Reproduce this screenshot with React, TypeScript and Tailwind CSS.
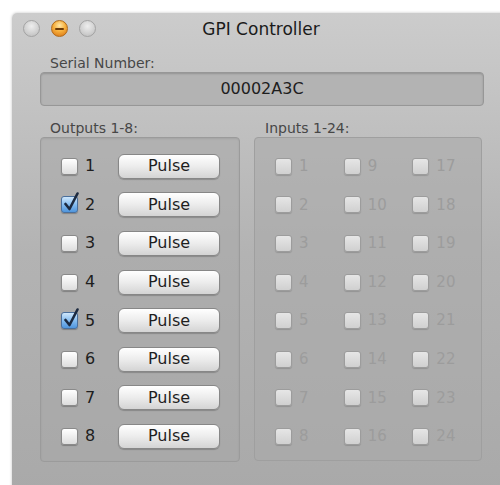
import React, { useState } from 'react';

const font = { fontFamily: '"DejaVu Sans", "Liberation Sans", sans-serif' };

const Light = ({ active }: { active?: boolean }) => (
  <div
    className={
      active
        ? 'w-[17px] h-[17px] rounded-full border border-[#b06a1a] bg-[radial-gradient(circle_at_50%_30%,#ffe7a8_0%,#f7b03c_45%,#d56e12_100%)] flex items-center justify-center'
        : 'w-[17px] h-[17px] rounded-full border border-[#a3a3a3] bg-[radial-gradient(circle_at_50%_35%,#eeeeee_0%,#cfcfcf_60%,#b9b9b9_100%)]'
    }
  >
    {active && <div className="w-[9px] h-[2px] bg-[#6b3a08] rounded-sm" />}
  </div>
);

const CheckBox = ({ checked, disabled, onClick }: { checked?: boolean; disabled?: boolean; onClick?: () => void }) => (
  <div
    onClick={onClick}
    className={
      'relative w-[17px] h-[17px] rounded-[3px] border shrink-0 ' +
      (disabled
        ? 'border-[#9c9c9c] bg-gradient-to-b from-[#e6e6e6] to-[#d0d0d0] shadow-[0_1px_1px_rgba(0,0,0,0.15)]'
        : checked
        ? 'border-[#4a6f9c] bg-gradient-to-b from-[#cfe7fb] via-[#86bdf0] to-[#4f95dc] shadow-[0_1px_1px_rgba(0,0,0,0.25)]'
        : 'border-[#8a8a8a] bg-gradient-to-b from-[#ffffff] to-[#dddddd] shadow-[0_1px_1px_rgba(0,0,0,0.25)]')
    }
  >
    {checked && (
      <svg className="absolute left-[1px] top-[-5px]" width="17" height="20" viewBox="0 0 17 20">
        <path d="M2.5 12 L6.5 17 L14.5 1.5" fill="none" stroke="#1c2a40" strokeWidth="2.6" strokeLinejoin="round" strokeLinecap="round" />
      </svg>
    )}
  </div>
);

export default function App() {
  const [outs, setOuts] = useState<boolean[]>([false, true, false, false, true, false, false, false]);

  return (
    <div className="w-[500px] h-[485px] overflow-hidden bg-white" style={font}>
      <div className="ml-[12px] mt-[13px] w-[498px] h-[480px] rounded-t-[5px] bg-gradient-to-b from-[#cccccc] via-[#b3b3b3] to-[#a9a9a9] shadow-[0_0_3px_rgba(0,0,0,0.25)]">
        {/* title bar */}
        <div className="h-[30px] flex items-center relative">
          <div className="flex items-center gap-[11px] pl-[11px] pt-[1px]">
            <Light />
            <Light active />
            <Light />
          </div>
          <div className="absolute inset-x-0 top-[4px] text-center text-[17px] text-[#1a1a1a]">GPI Controller</div>
        </div>

        <div className="px-[28px]">
          {/* serial number */}
          <div className="pl-[10px] pt-[11px] text-[14px] leading-[18px] text-[#474747]">Serial Number:</div>
          <div className="h-[34px] w-[444px] rounded-[4px] border border-[#979797] bg-[#b3b3b3] shadow-[inset_0_1px_2px_rgba(0,0,0,0.18)] flex items-center justify-center text-[16px] text-[#1e1e1e]">
            00002A3C
          </div>

          <div className="flex gap-[14px] mt-[13px]">
            {/* outputs */}
            <div className="w-[202px]">
              <div className="pl-[10px] text-[14px] leading-[18px] text-[#474747]">Outputs 1-8:</div>
              <div className="h-[325px] rounded-[4px] border border-[#9b9b9b] bg-[#a8a8a8]/60 shadow-[inset_0_1px_2px_rgba(0,0,0,0.08)] pt-[9px]">
                {outs.map((on, i) => (
                  <div key={i} className="h-[38.6px] flex items-center pl-[20px]">
                    <CheckBox checked={on} onClick={() => setOuts(outs.map((v, j) => (j === i ? !v : v)))} />
                    <span className="ml-[7px] w-[33px] text-[16px] text-[#1e1e1e]">{i + 1}</span>
                    <button className="w-[102px] h-[25px] rounded-[6px] border border-[#878787] bg-gradient-to-b from-[#ffffff] via-[#ececec] to-[#d4d4d4] shadow-[0_1px_1px_rgba(0,0,0,0.2)] text-[16px] leading-[20px] text-[#1e1e1e]">
                      Pulse
                    </button>
                  </div>
                ))}
              </div>
            </div>

            {/* inputs */}
            <div className="w-[228px]">
              <div className="pl-[11px] text-[14px] leading-[18px] text-[#474747]">Inputs 1-24:</div>
              <div className="h-[324px] rounded-[4px] border border-[#9f9f9f] bg-[#aaaaaa]/60 pt-[9px]">
                {Array.from({ length: 8 }).map((_, r) => (
                  <div key={r} className="h-[38.6px] flex items-center pl-[20px]">
                    {[r + 1, r + 9, r + 17].map((n) => (
                      <div key={n} className="w-[69.5px] flex items-center">
                        <CheckBox disabled />
                        <span className="ml-[7px] text-[15px] text-[#9c9c9c]">{n}</span>
                      </div>
                    ))}
                  </div>
                ))}
              </div>
            </div>
          </div>
        </div>
      </div>
    </div>
  );
}
